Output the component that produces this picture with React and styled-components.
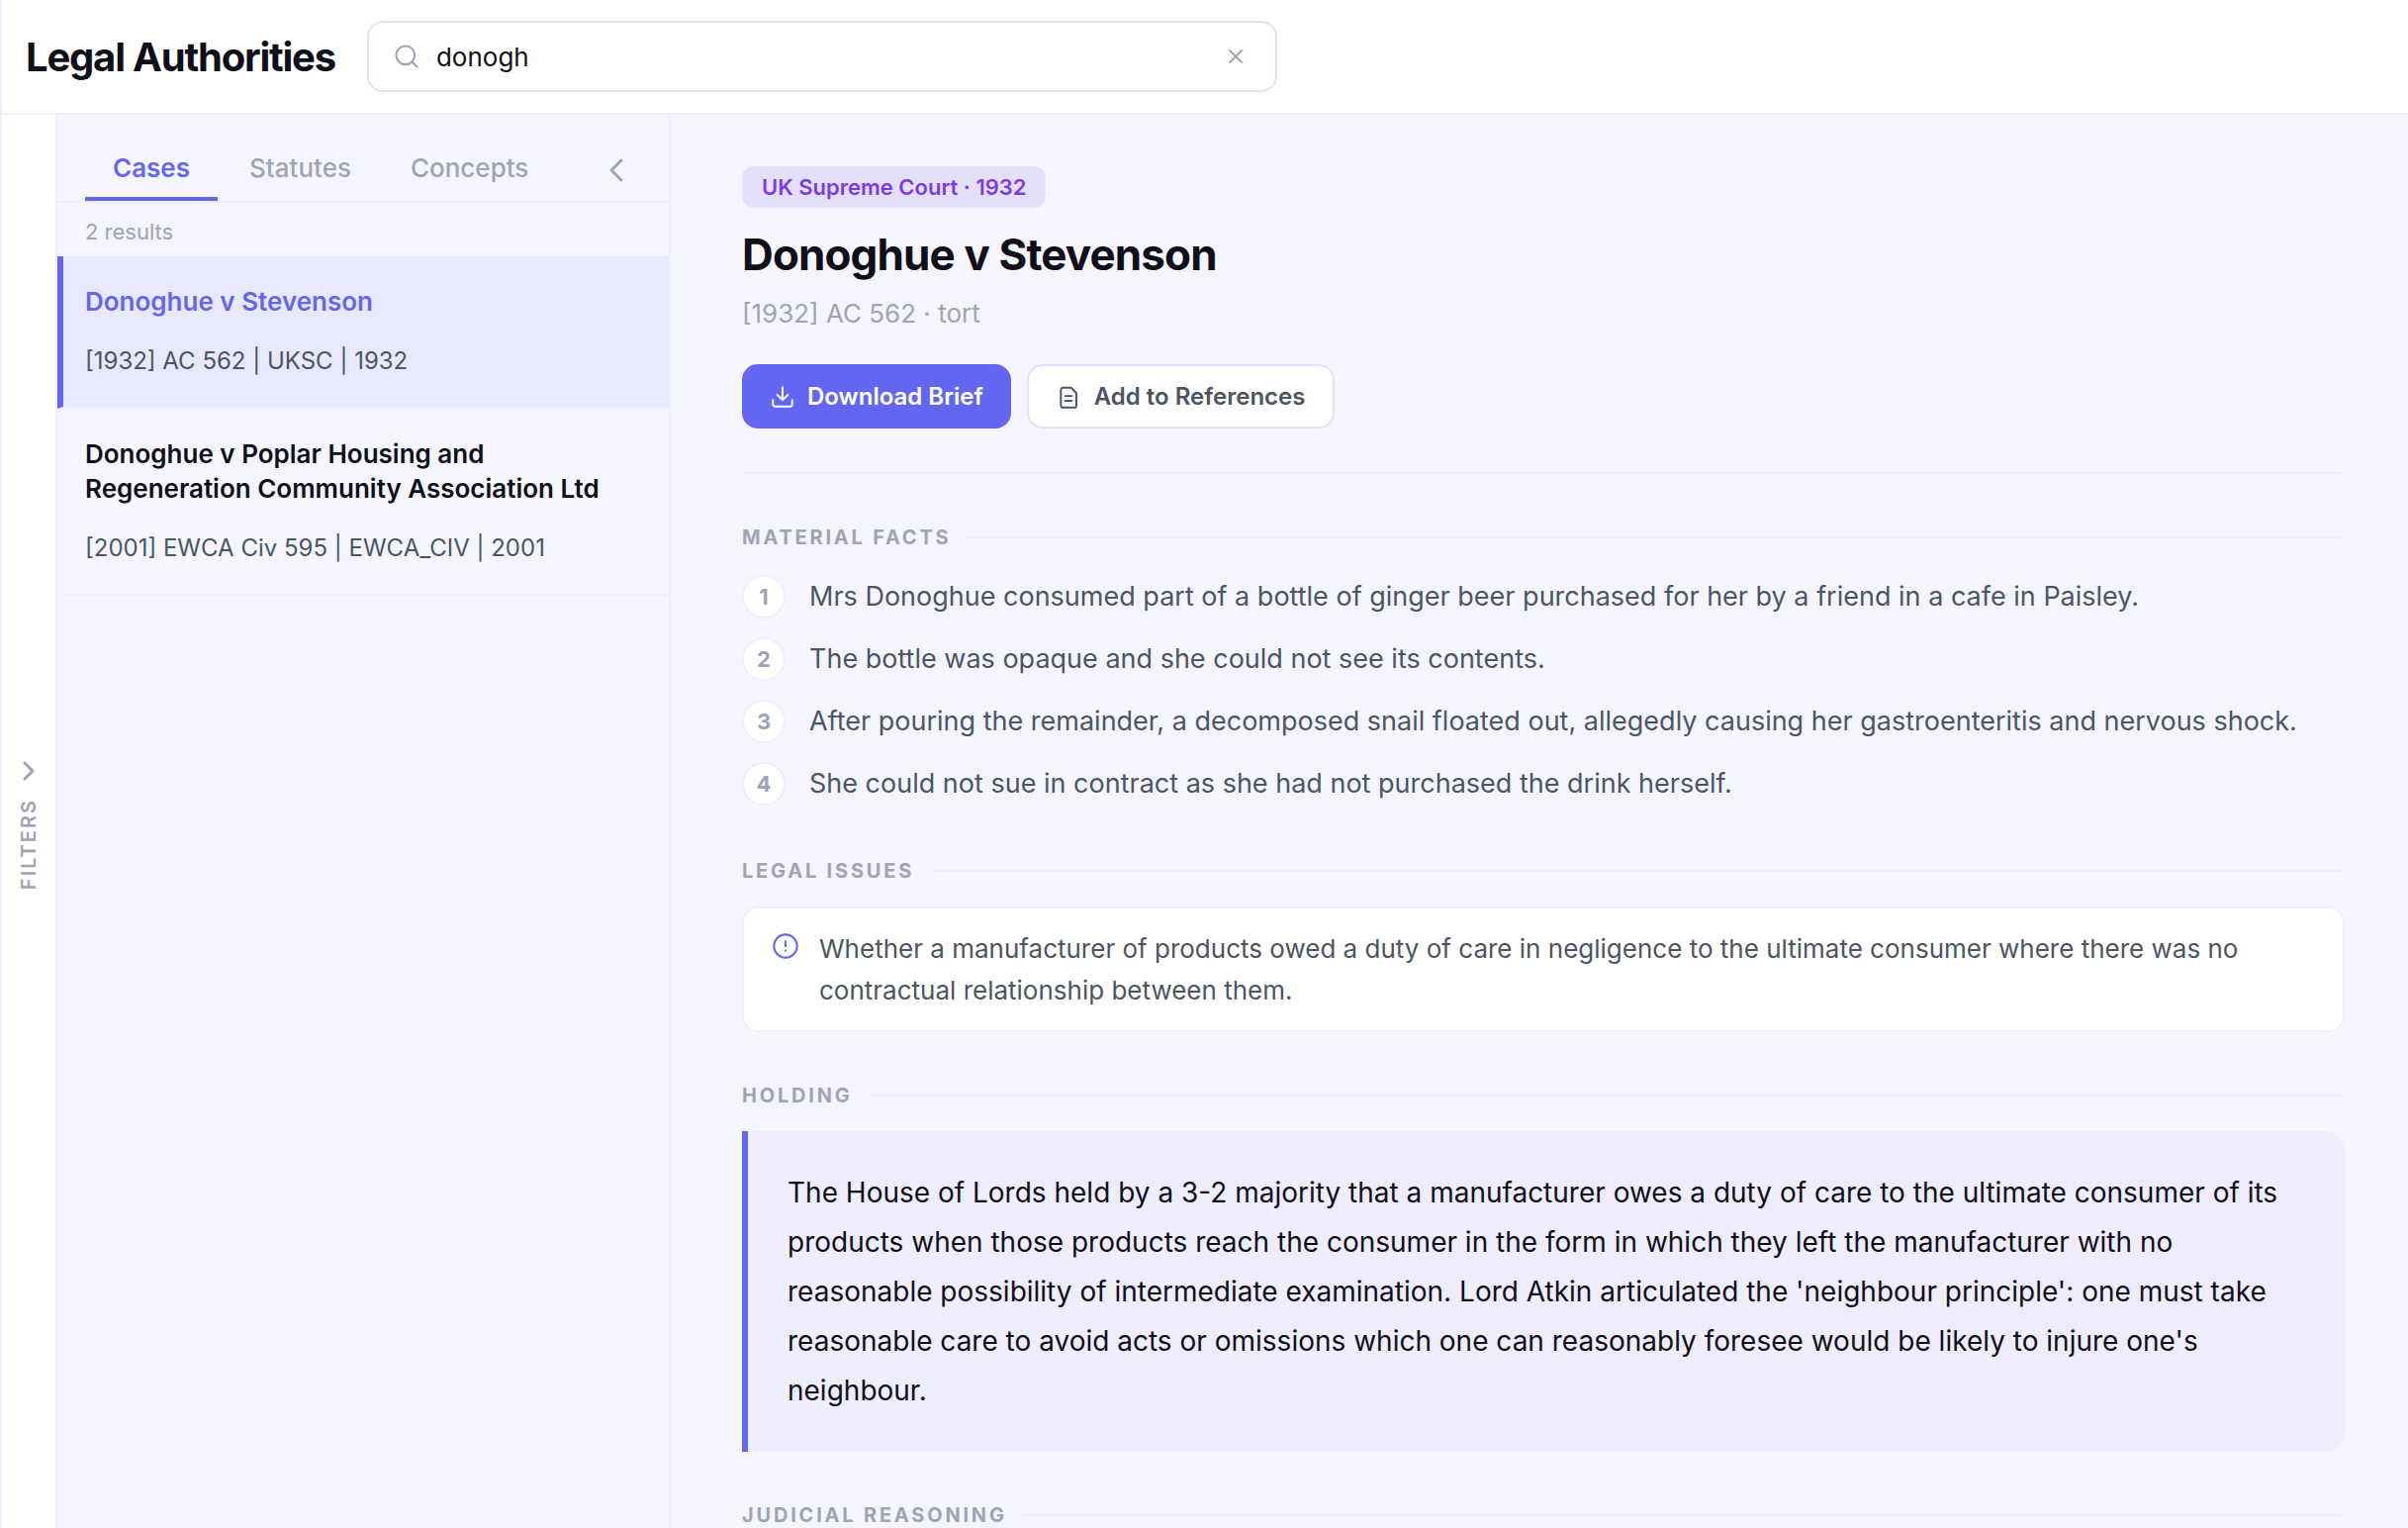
import React, { useState } from "react";
import styled, { createGlobalStyle, css } from "styled-components";

const color = {
  ink: "#0f0f1a",
  body: "#4b5563",
  muted: "#a0a3b4",
  accent: "#6366f1",
  violet: "#7c3aed",
  page: "#f5f5ff",
  surface: "#ffffff",
  hairline: "#efeeff",
  outline: "#e3e0fa",
  selected: "#e9e9fe",
};

const GlobalStyle = createGlobalStyle`
  *, *::before, *::after { box-sizing: border-box; }
  body {
    margin: 0;
    background: ${color.page};
    color: ${color.ink};
    font-family: Inter, "Liberation Sans", sans-serif;
    -webkit-font-smoothing: antialiased;
  }
  h1, h2, h3, p, ol, ul { margin: 0; padding: 0; }
  ol, ul { list-style: none; }
  button, input { font: inherit; }
  button { cursor: pointer; }
`;

const Shell = styled.div`
  display: flex;
  flex-direction: column;
  height: 100vh;
  border-left: 2px solid ${color.hairline};
`;

const Header = styled.header`
  display: flex;
  align-items: center;
  gap: 32px;
  padding: 21px 24px;
  background: ${color.surface};
  border-bottom: 2px solid ${color.hairline};
`;

const PageTitle = styled.h1`
  font-size: 40px;
  line-height: 49px;
  font-weight: 700;
  letter-spacing: -0.03em;
  white-space: nowrap;
`;

const SearchBox = styled.label`
  display: flex;
  flex: 1;
  align-items: center;
  gap: 16px;
  max-width: 920px;
  height: 72px;
  padding: 0 24px;
  background: ${color.surface};
  border: 2px solid ${color.outline};
  border-radius: 16px;
  color: ${color.muted};
`;

const SearchInput = styled.input`
  flex: 1;
  min-width: 0;
  padding: 0;
  border: 0;
  outline: 0;
  background: transparent;
  color: ${color.ink};
  font-size: 26px;
  line-height: 33px;
`;

const IconButton = styled.button`
  display: flex;
  align-items: center;
  justify-content: center;
  width: ${(p) => p.$size}px;
  height: ${(p) => p.$size}px;
  padding: 0;
  border: 0;
  background: transparent;
  color: ${color.muted};
`;

const Workspace = styled.div`
  display: flex;
  flex: 1;
  min-height: 0;
`;

const FilterRail = styled.button`
  display: flex;
  flex: none;
  flex-direction: column;
  align-items: center;
  justify-content: center;
  gap: 12px;
  width: 56px;
  padding: 2px 0 0;
  background: ${color.surface};
  border: 0;
  border-right: 2px solid ${color.hairline};
  color: ${color.muted};
`;

const RailLabel = styled.span`
  writing-mode: vertical-rl;
  transform: rotate(180deg);
  font-size: 20px;
  line-height: 24px;
  font-weight: 600;
  letter-spacing: 2px;
  text-transform: uppercase;
`;

const ResultsPanel = styled.aside`
  flex: none;
  width: 620px;
  border-right: 2px solid ${color.hairline};
`;

const TabBar = styled.div`
  display: flex;
  align-items: center;
  justify-content: space-between;
  padding: 24px 28px 0;
  border-bottom: 2px solid ${color.hairline};
`;

const TabList = styled.div`
  display: flex;
  gap: 4px;
`;

const Tab = styled.button`
  padding: 14px 28px;
  border: 0;
  border-bottom: 4px solid ${(p) => (p.$active ? color.accent : "transparent")};
  background: transparent;
  color: ${(p) => (p.$active ? color.accent : color.muted)};
  font-size: 26px;
  line-height: 31px;
  font-weight: ${(p) => (p.$active ? 600 : 500)};
`;

const ResultCount = styled.p`
  padding: 16px 28px 12px;
  color: ${color.muted};
  font-size: 22px;
  line-height: 26px;
`;

const ResultItem = styled.button`
  display: flex;
  flex-direction: column;
  gap: 24px;
  width: 100%;
  padding: 28px 28px 27px 22px;
  border: 0;
  border-left: 6px solid transparent;
  border-bottom: 2px solid ${color.hairline};
  background: transparent;
  color: ${color.ink};
  text-align: left;

  ${(p) =>
    p.$active &&
    css`
      border-left-color: ${color.accent};
      background: ${color.selected};
      color: ${color.accent};
    `}
`;

const ResultName = styled.span`
  font-size: 26px;
  line-height: 35px;
  font-weight: 600;
`;

const ResultMeta = styled.span`
  color: ${color.body};
  font-size: 24px;
  line-height: 38px;
`;

const Detail = styled.main`
  display: flex;
  flex: 1;
  flex-direction: column;
  gap: 52px;
  min-width: 0;
  padding: 52px 64px 52px 72px;
  overflow-y: auto;
  scrollbar-width: none;
`;

const CaseHeader = styled.header`
  display: flex;
  flex: none;
  flex-direction: column;
  align-items: flex-start;
  padding-bottom: 44px;
  border-bottom: 2px solid ${color.hairline};
`;

const CourtBadge = styled.span`
  padding: 8px 20px;
  border-radius: 12px;
  background: #e4e0f9;
  color: ${color.violet};
  font-size: 22px;
  line-height: 26px;
  font-weight: 600;
`;

const CaseTitle = styled.h2`
  margin-top: 20px;
  font-size: 44px;
  line-height: 54px;
  font-weight: 700;
  letter-spacing: -0.02em;
`;

const Citation = styled.p`
  margin-top: 16px;
  color: ${color.muted};
  font-size: 26px;
  line-height: 34px;
`;

const Actions = styled.div`
  display: flex;
  gap: 16px;
  margin-top: 34px;
`;

const ActionButton = styled.button`
  display: flex;
  align-items: center;
  gap: 12px;
  height: 65px;
  padding: 0 28px;
  border: 0;
  border-radius: 16px;
  background: ${color.accent};
  color: #ffffff;
  font-size: 24px;
  line-height: 30px;
  font-weight: 600;

  ${(p) =>
    p.$outlined &&
    css`
      border: 2px solid ${color.outline};
      background: ${color.surface};
      color: ${color.body};
    `}
`;

const Section = styled.section`
  display: flex;
  flex: none;
  flex-direction: column;
  gap: 24px;
`;

const SectionTitle = styled.h3`
  display: flex;
  align-items: center;
  gap: 16px;
  color: ${color.muted};
  font-size: 20px;
  line-height: 24px;
  font-weight: 700;
  letter-spacing: 0.14em;
  text-transform: uppercase;

  &::after {
    content: "";
    flex: 1;
    height: 2px;
    background: ${color.hairline};
  }
`;

const FactList = styled.ol`
  display: flex;
  flex-direction: column;
  gap: 16px;
  padding-bottom: 1px;
`;

const Fact = styled.li`
  display: flex;
  align-items: flex-start;
  gap: 24px;
  color: ${color.body};
  font-size: 27px;
  line-height: 47px;
`;

const FactNumber = styled.span`
  display: flex;
  flex: none;
  align-items: center;
  justify-content: center;
  width: 44px;
  height: 44px;
  margin-top: 2px;
  border: 2px solid ${color.hairline};
  border-radius: 50%;
  background: ${color.surface};
  color: ${color.muted};
  font-size: 22px;
  line-height: 26px;
  font-weight: 700;
`;

const IssueCard = styled.div`
  display: flex;
  align-items: flex-start;
  gap: 20px;
  padding: 20px 28px 19px;
  border: 2px solid ${color.hairline};
  border-radius: 16px;
  background: ${color.surface};
  color: ${color.body};
  font-size: 26px;
  line-height: 42px;
`;

const IssueMark = styled.span`
  display: flex;
  flex: none;
  padding-top: 4px;
  color: ${color.accent};
`;

const Holding = styled.p`
  padding: 37px 40px;
  border-left: 6px solid ${color.accent};
  border-radius: 0 20px 20px 0;
  background: linear-gradient(135deg, #efeefe, #eeecfd);
  font-size: 28px;
  line-height: 50px;
`;

function Icon({ size, stroke = 2, children }) {
  return (
    <svg
      width={size}
      height={size}
      viewBox="0 0 24 24"
      fill="none"
      stroke="currentColor"
      strokeWidth={stroke}
      strokeLinecap="round"
      strokeLinejoin="round"
      aria-hidden="true"
    >
      {children}
    </svg>
  );
}

const tabs = ["Cases", "Statutes", "Concepts"];

const results = [
  { name: "Donoghue v Stevenson", meta: "[1932] AC 562 | UKSC | 1932" },
  {
    name: "Donoghue v Poplar Housing and Regeneration Community Association Ltd",
    meta: "[2001] EWCA Civ 595 | EWCA_CIV | 2001",
  },
];

const facts = [
  "Mrs Donoghue consumed part of a bottle of ginger beer purchased for her by a friend in a cafe in Paisley.",
  "The bottle was opaque and she could not see its contents.",
  "After pouring the remainder, a decomposed snail floated out, allegedly causing her gastroenteritis and nervous shock.",
  "She could not sue in contract as she had not purchased the drink herself.",
];

export default function App() {
  const [query, setQuery] = useState("donogh");
  const [tab, setTab] = useState("Cases");
  const [selected, setSelected] = useState(0);

  return (
    <>
      <GlobalStyle />
      <Shell>
        <Header>
          <PageTitle>Legal Authorities</PageTitle>
          <SearchBox>
            <Icon size={28} stroke={1.8}>
              <circle cx="11" cy="11" r="8" />
              <path d="M21 21l-4.35-4.35" />
            </Icon>
            <SearchInput
              type="text"
              aria-label="Search authorities"
              value={query}
              onChange={(e) => setQuery(e.target.value)}
            />
            <IconButton type="button" $size={32} aria-label="Clear search" onClick={() => setQuery("")}>
              <Icon size={24} stroke={1.8}>
                <path d="M18 6L6 18M6 6l12 12" />
              </Icon>
            </IconButton>
          </SearchBox>
        </Header>

        <Workspace>
          <FilterRail type="button">
            <Icon size={32} stroke={2.3}>
              <path d="M9 18l6-6-6-6" />
            </Icon>
            <RailLabel>Filters</RailLabel>
          </FilterRail>

          <ResultsPanel>
            <TabBar>
              <TabList role="tablist">
                {tabs.map((name) => (
                  <Tab
                    key={name}
                    type="button"
                    role="tab"
                    aria-selected={tab === name}
                    $active={tab === name}
                    onClick={() => setTab(name)}
                  >
                    {name}
                  </Tab>
                ))}
              </TabList>
              <IconButton type="button" $size={50} aria-label="Collapse results">
                <Icon size={40} stroke={1.8}>
                  <path d="M15 18l-6-6 6-6" />
                </Icon>
              </IconButton>
            </TabBar>
            <ResultCount>2 results</ResultCount>
            {results.map((r, i) => (
              <ResultItem key={r.name} type="button" $active={selected === i} onClick={() => setSelected(i)}>
                <ResultName>{r.name}</ResultName>
                <ResultMeta>{r.meta}</ResultMeta>
              </ResultItem>
            ))}
          </ResultsPanel>

          <Detail>
            <CaseHeader>
              <CourtBadge>UK Supreme Court · 1932</CourtBadge>
              <CaseTitle>Donoghue v Stevenson</CaseTitle>
              <Citation>[1932] AC 562 · tort</Citation>
              <Actions>
                <ActionButton type="button">
                  <Icon size={26} stroke={1.8}>
                    <path d="M21 15v4a2 2 0 0 1-2 2H5a2 2 0 0 1-2-2v-4" />
                    <path d="M7 10l5 5 5-5M12 15V3" />
                  </Icon>
                  Download Brief
                </ActionButton>
                <ActionButton type="button" $outlined>
                  <Icon size={26} stroke={1.8}>
                    <path d="M13.5 3.5H6a2 2 0 0 0-2 2V20a2 2 0 0 0 2 2h10.5a2 2 0 0 0 2-2V8.5z" />
                    <path d="M8.2 11.2h6M8.2 15.6h6" />
                  </Icon>
                  Add to References
                </ActionButton>
              </Actions>
            </CaseHeader>

            <Section>
              <SectionTitle>Material Facts</SectionTitle>
              <FactList>
                {facts.map((text, i) => (
                  <Fact key={text}>
                    <FactNumber>{i + 1}</FactNumber>
                    <span>{text}</span>
                  </Fact>
                ))}
              </FactList>
            </Section>

            <Section>
              <SectionTitle>Legal Issues</SectionTitle>
              <IssueCard>
                <IssueMark>
                  <Icon size={28} stroke={1.8}>
                    <circle cx="12" cy="12" r="10" />
                    <path d="M12 8v4M12 16h.01" />
                  </Icon>
                </IssueMark>
                <p>
                  Whether a manufacturer of products owed a duty of care in negligence to the ultimate consumer where
                  there was no contractual relationship between them.
                </p>
              </IssueCard>
            </Section>

            <Section>
              <SectionTitle>Holding</SectionTitle>
              <Holding>
                The House of Lords held by a 3-2 majority that a manufacturer owes a duty of care to the ultimate
                consumer of its products when those products reach the consumer in the form in which they left the
                manufacturer with no reasonable possibility of intermediate examination. Lord Atkin articulated the
                'neighbour principle': one must take reasonable care to avoid acts or omissions which one can
                reasonably foresee would be likely to injure one's neighbour.
              </Holding>
            </Section>

            <Section>
              <SectionTitle>Judicial Reasoning</SectionTitle>
            </Section>
          </Detail>
        </Workspace>
      </Shell>
    </>
  );
}
